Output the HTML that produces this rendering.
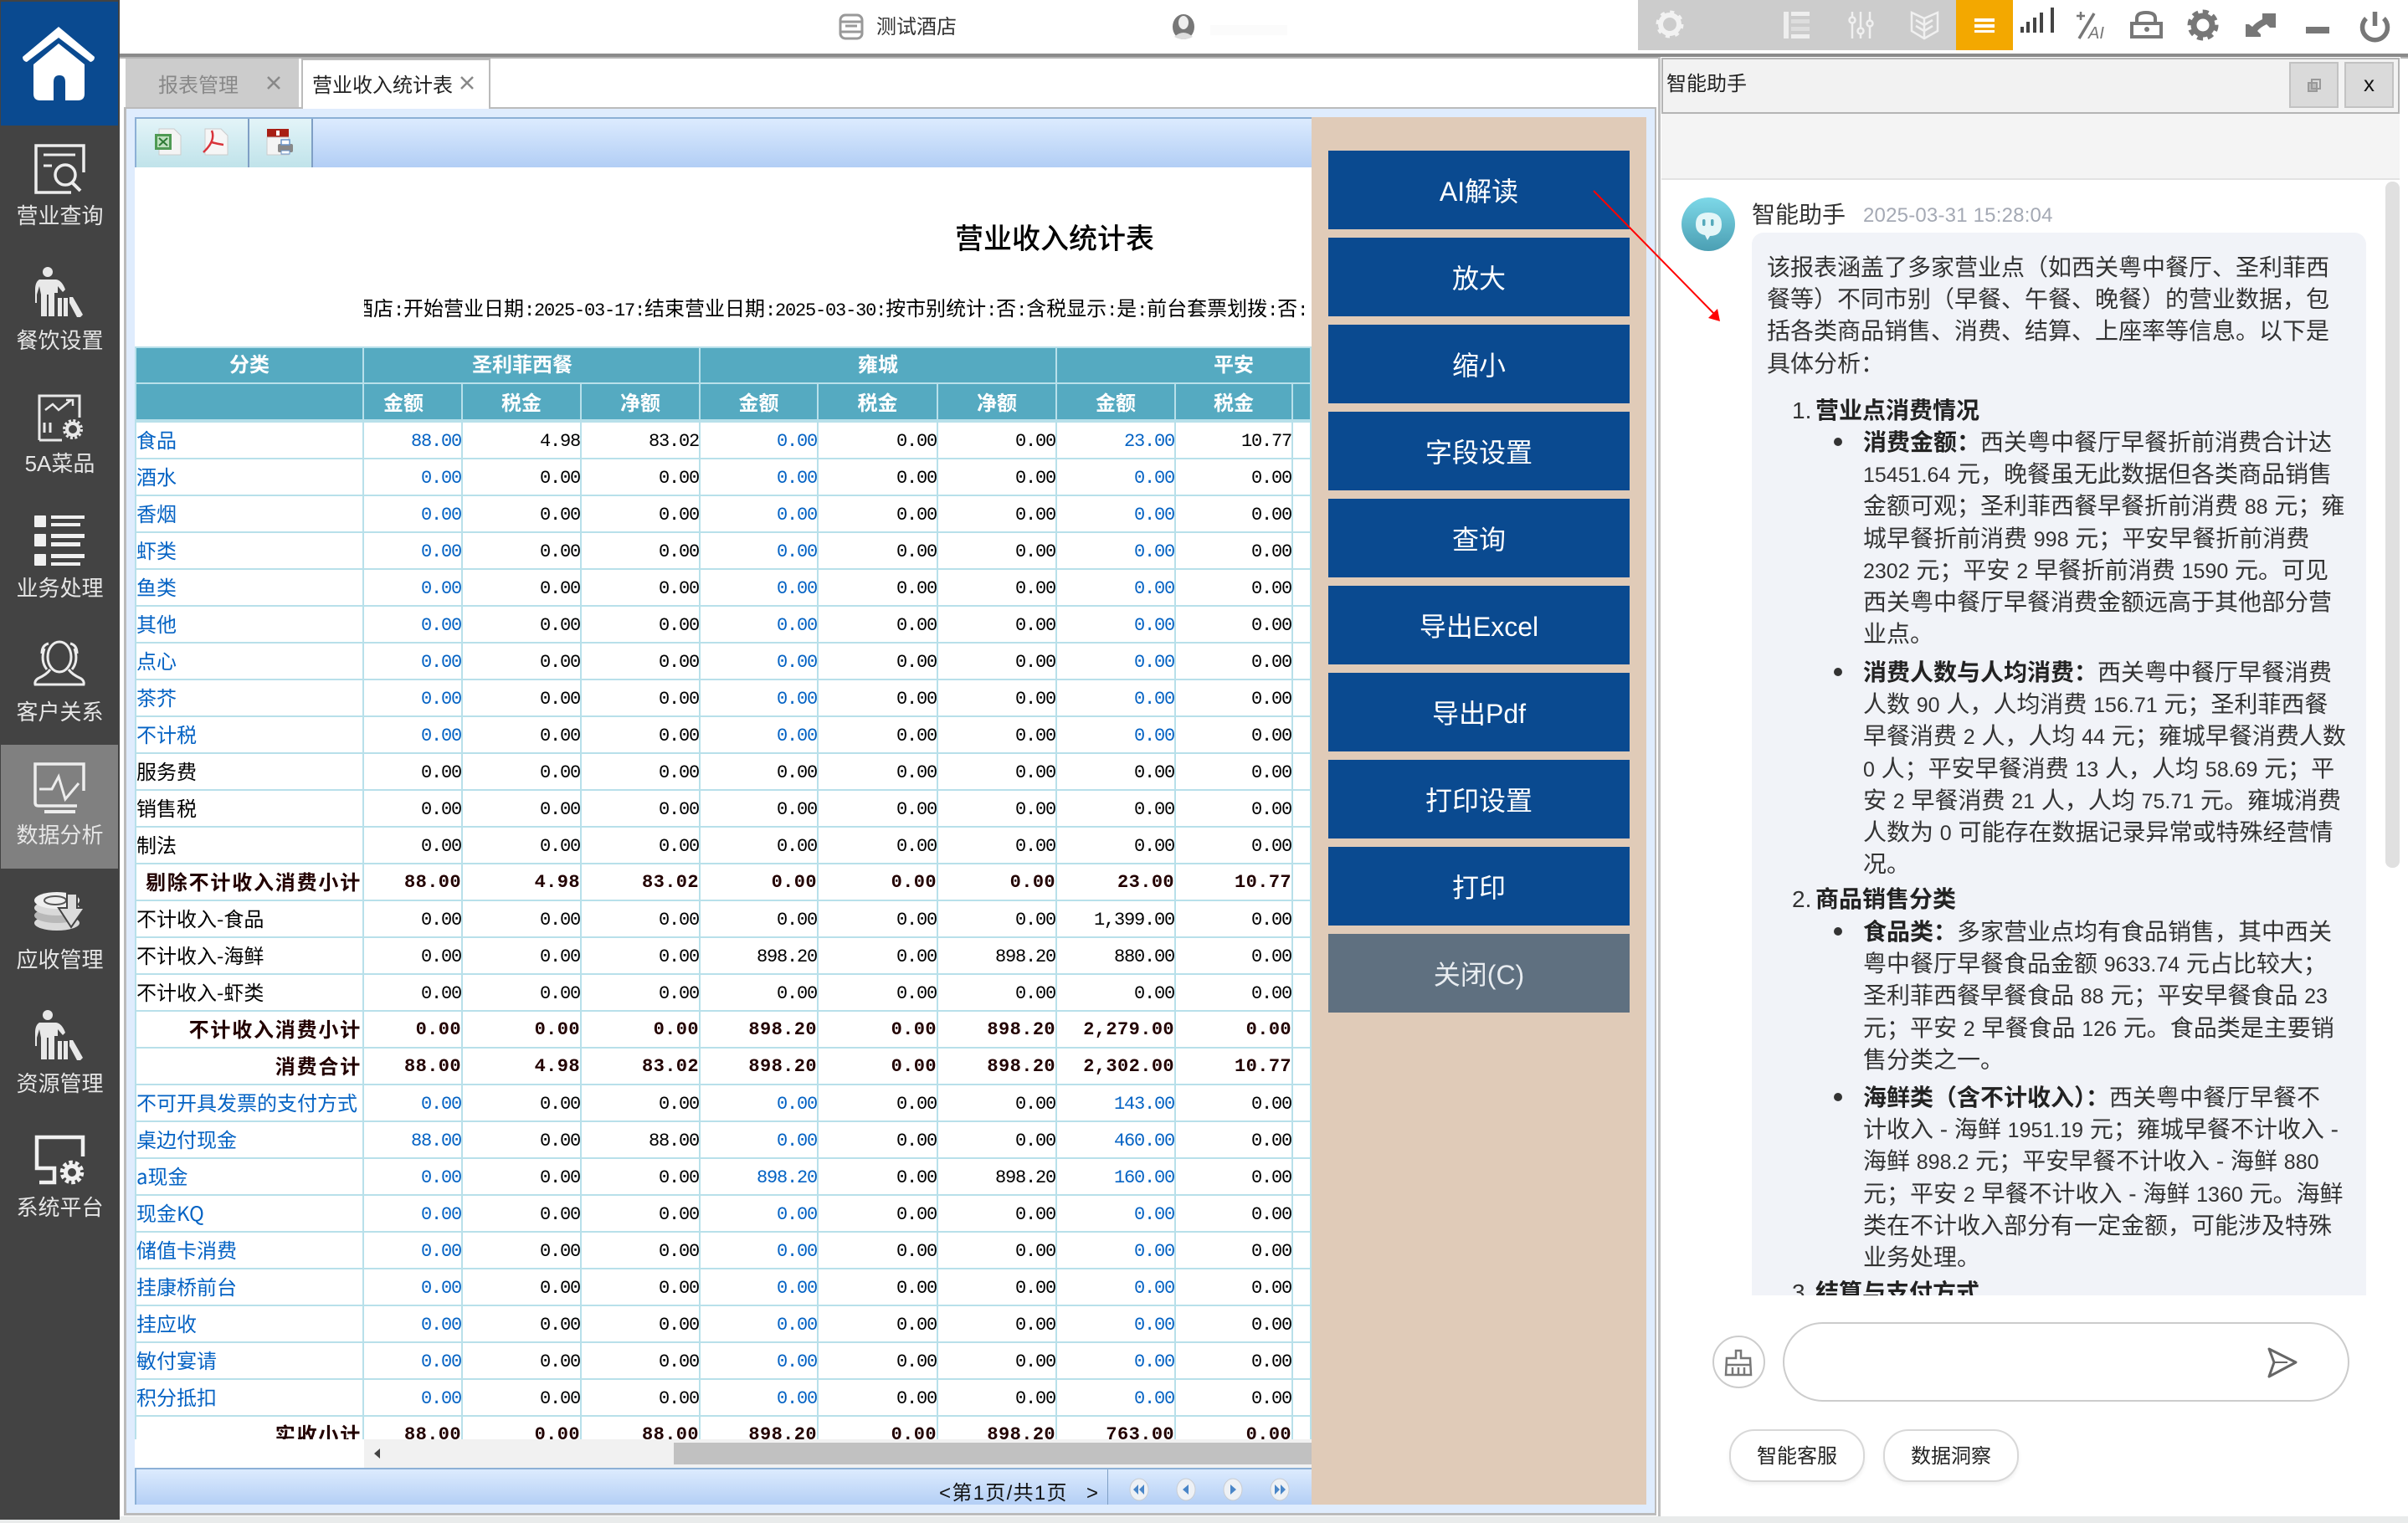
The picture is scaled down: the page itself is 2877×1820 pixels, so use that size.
<!DOCTYPE html>
<html lang="zh"><head><meta charset="utf-8"><title>营业收入统计表</title>
<style>
html,body{margin:0;padding:0;width:2877px;height:1820px;overflow:hidden;background:#fff}
body{position:relative;font-family:"Liberation Sans","Noto Sans CJK SC",sans-serif;color:#222}
div{position:absolute;box-sizing:border-box}
.side{left:0;top:0;width:143px;height:1816px;background:#434343}
.sl{left:0;width:143px;text-align:center;font-size:26px;line-height:30px;color:#e6e6e6;white-space:nowrap}
.t{white-space:nowrap;line-height:1}
.btn{left:1587px;width:360px;height:94px;background:#0a4a90;color:#fff;font-size:32px;line-height:98px;text-align:center}
#tw{left:161px;top:414px;width:1406px;height:1306px;overflow:hidden;background:#fff}
table{border-collapse:separate;border-spacing:0;table-layout:fixed;width:1406px;font-family:"Liberation Mono","Noto Sans CJK SC",monospace;font-size:22px;letter-spacing:-1.2px;color:#000;position:absolute;left:0;top:0}
td{height:44px;box-sizing:border-box;border-right:2px solid #b8e0ea;border-bottom:2px solid #b8e0ea;text-align:right;padding:3px 0 0;white-space:nowrap;line-height:1;overflow:hidden}
td:first-child{text-align:left;font-family:"Noto Sans CJK SC",sans-serif;font-size:24px;letter-spacing:0;border-left:2px solid #b8e0ea;padding:0 0 3px}
tr.h td{background:#55aac1;color:#fff;font-family:"Noto Sans CJK SC",sans-serif;font-weight:bold;font-size:24px;letter-spacing:0;text-align:center;border-color:#b8e0ea;padding:0}
tr.h0 td{border-top:2px solid #b8e0ea;height:45px;padding-bottom:5px}
tr.h1 td{border-bottom:4px solid #b8e0ea;height:46px}
tr.l td:nth-child(1),tr.l td:nth-child(2),tr.l td:nth-child(5),tr.l td:nth-child(8){color:#0563c4}
tr.s td{font-weight:bold;letter-spacing:.4px;color:#200;padding-top:1px}
tr.s td:first-child{text-align:right;padding:0 1px 3px 0;font-size:24px;letter-spacing:1.8px}
#bub{left:2093px;top:278px;width:734px;height:1270px;background:#f1f3f8;border-radius:14px 14px 0 0;overflow:hidden;font-family:"Liberation Sans","Noto Sans CJK SC",sans-serif;font-size:28px;line-height:38.2px;color:#333}
#bub div{white-space:nowrap}
#bub i{font-style:normal;font-size:25px;line-height:0}
#bub b{color:#222}
.chip{top:1708px;width:162px;height:63px;border:2px solid #d8d8d8;border-radius:30px;background:#fff;text-align:center;font-size:24px;line-height:62px;color:#222;box-shadow:0 3px 5px rgba(0,0,0,.06)}
#sub i{font-style:normal;font-family:"Liberation Mono",monospace;font-size:22px;letter-spacing:-1.2px;line-height:0}
</style></head>
<body>
<div style="left:0;top:1812px;width:2877px;height:8px;background:#e9ebeb"></div>
<div style="left:143px;top:64px;width:2734px;height:4px;background:#8a8a8a"></div>
<div style="left:143px;top:68px;width:2734px;height:2px;background:#b4b4b4"></div>

<!-- sidebar -->
<div class="side"></div>
<div style="left:1px;top:2px;width:140px;height:148px;background:#0a4a90"></div>
<div style="left:1px;top:890px;width:140px;height:148px;background:#808080"></div>
<div class="sl" style="top:243px">营业查询</div>
<div class="sl" style="top:392px">餐饮设置</div>
<div class="sl" style="top:539px">5A菜品</div>
<div class="sl" style="top:688px">业务处理</div>
<div class="sl" style="top:836px">客户关系</div>
<div class="sl" style="top:983px">数据分析</div>
<div class="sl" style="top:1132px">应收管理</div>
<div class="sl" style="top:1280px">资源管理</div>
<div class="sl" style="top:1428px">系统平台</div>

<!-- tabs -->
<div style="left:148px;top:128px;width:1831px;height:2px;background:#bbb"></div>
<div style="left:150px;top:70px;width:207px;height:58px;background:#ccc"></div>
<div class="t" style="left:189px;top:91px;font-size:24px;color:#888">报表管理</div>
<div style="left:360px;top:70px;width:226px;height:60px;background:#fff;border:2px solid #bbb;border-bottom:none"></div>
<div class="t" style="left:373px;top:91px;font-size:24px;color:#222">营业收入统计表</div>

<!-- main panel -->
<div style="left:148px;top:130px;width:1831px;height:1681px;background:#dfecfd;border-left:3px solid #bbb;border-right:2px solid #bbb;border-bottom:3px solid #bbb"></div>
<div style="left:161px;top:140px;width:1406px;height:60px;background:linear-gradient(#dcebfe,#b2cef5);border-top:2px solid #8cb0d6"></div>
<div style="left:161px;top:142px;width:135px;height:58px;background:linear-gradient(#e3f4f8,#c0e3ea);border-left:2px solid #8cb0d6"></div>
<div style="left:296px;top:142px;width:78px;height:58px;background:linear-gradient(#e3f4f8,#c0e3ea);border-left:2px solid #7f9fc5;border-right:2px solid #7f9fc5"></div>
<div style="left:161px;top:200px;width:1406px;height:1554px;background:#fff"></div>
<div class="t" style="left:1141px;top:266px;font-size:34px;font-family:'Noto Sans CJK SC',sans-serif;font-weight:500;color:#000">营业收入统计表</div>
<div style="left:435px;top:352px;width:1132px;height:34px;overflow:hidden">
<div class="t" id="sub" style="left:-13px;top:3px;font-size:24px;color:#000;font-family:'Noto Sans CJK SC',sans-serif">酒店<i>:</i>开始营业日期<i>:2025-03-17:</i>结束营业日期<i>:2025-03-30:</i>按市别统计<i>:</i>否<i>:</i>含税显示<i>:</i>是<i>:</i>前台套票划拨<i>:</i>否<i>:</i></div></div>

<div id="tw"><table>
<colgroup><col style="width:274px"><col style="width:118px"><col style="width:142px"><col style="width:142px"><col style="width:141px"><col style="width:143px"><col style="width:142px"><col style="width:142px"><col style="width:140px"><col style="width:22px"></colgroup>
<tr class="h h0"><td>分类</td><td colspan="3" style="padding-right:22px">圣利菲西餐</td><td colspan="3">雍城</td><td colspan="3" style="padding-left:120px">平安</td></tr>
<tr class="h h1"><td></td><td style="padding-right:22px">金额</td><td>税金</td><td>净额</td><td>金额</td><td>税金</td><td>净额</td><td>金额</td><td>税金</td><td></td></tr>
<tr class="l"><td>食品</td><td>88.00</td><td>4.98</td><td>83.02</td><td>0.00</td><td>0.00</td><td>0.00</td><td>23.00</td><td>10.77</td><td></td></tr>
<tr class="l"><td>酒水</td><td>0.00</td><td>0.00</td><td>0.00</td><td>0.00</td><td>0.00</td><td>0.00</td><td>0.00</td><td>0.00</td><td></td></tr>
<tr class="l"><td>香烟</td><td>0.00</td><td>0.00</td><td>0.00</td><td>0.00</td><td>0.00</td><td>0.00</td><td>0.00</td><td>0.00</td><td></td></tr>
<tr class="l"><td>虾类</td><td>0.00</td><td>0.00</td><td>0.00</td><td>0.00</td><td>0.00</td><td>0.00</td><td>0.00</td><td>0.00</td><td></td></tr>
<tr class="l"><td>鱼类</td><td>0.00</td><td>0.00</td><td>0.00</td><td>0.00</td><td>0.00</td><td>0.00</td><td>0.00</td><td>0.00</td><td></td></tr>
<tr class="l"><td>其他</td><td>0.00</td><td>0.00</td><td>0.00</td><td>0.00</td><td>0.00</td><td>0.00</td><td>0.00</td><td>0.00</td><td></td></tr>
<tr class="l"><td>点心</td><td>0.00</td><td>0.00</td><td>0.00</td><td>0.00</td><td>0.00</td><td>0.00</td><td>0.00</td><td>0.00</td><td></td></tr>
<tr class="l"><td>茶芥</td><td>0.00</td><td>0.00</td><td>0.00</td><td>0.00</td><td>0.00</td><td>0.00</td><td>0.00</td><td>0.00</td><td></td></tr>
<tr class="l"><td>不计税</td><td>0.00</td><td>0.00</td><td>0.00</td><td>0.00</td><td>0.00</td><td>0.00</td><td>0.00</td><td>0.00</td><td></td></tr>
<tr><td>服务费</td><td>0.00</td><td>0.00</td><td>0.00</td><td>0.00</td><td>0.00</td><td>0.00</td><td>0.00</td><td>0.00</td><td></td></tr>
<tr><td>销售税</td><td>0.00</td><td>0.00</td><td>0.00</td><td>0.00</td><td>0.00</td><td>0.00</td><td>0.00</td><td>0.00</td><td></td></tr>
<tr><td>制法</td><td>0.00</td><td>0.00</td><td>0.00</td><td>0.00</td><td>0.00</td><td>0.00</td><td>0.00</td><td>0.00</td><td></td></tr>
<tr class="s"><td>剔除不计收入消费小计</td><td>88.00</td><td>4.98</td><td>83.02</td><td>0.00</td><td>0.00</td><td>0.00</td><td>23.00</td><td>10.77</td><td></td></tr>
<tr><td>不计收入-食品</td><td>0.00</td><td>0.00</td><td>0.00</td><td>0.00</td><td>0.00</td><td>0.00</td><td>1,399.00</td><td>0.00</td><td></td></tr>
<tr><td>不计收入-海鲜</td><td>0.00</td><td>0.00</td><td>0.00</td><td>898.20</td><td>0.00</td><td>898.20</td><td>880.00</td><td>0.00</td><td></td></tr>
<tr><td>不计收入-虾类</td><td>0.00</td><td>0.00</td><td>0.00</td><td>0.00</td><td>0.00</td><td>0.00</td><td>0.00</td><td>0.00</td><td></td></tr>
<tr class="s"><td>不计收入消费小计</td><td>0.00</td><td>0.00</td><td>0.00</td><td>898.20</td><td>0.00</td><td>898.20</td><td>2,279.00</td><td>0.00</td><td></td></tr>
<tr class="s"><td>消费合计</td><td>88.00</td><td>4.98</td><td>83.02</td><td>898.20</td><td>0.00</td><td>898.20</td><td>2,302.00</td><td>10.77</td><td></td></tr>
<tr class="l"><td>不可开具发票的支付方式</td><td>0.00</td><td>0.00</td><td>0.00</td><td>0.00</td><td>0.00</td><td>0.00</td><td>143.00</td><td>0.00</td><td></td></tr>
<tr class="l"><td>桌边付现金</td><td>88.00</td><td>0.00</td><td>88.00</td><td>0.00</td><td>0.00</td><td>0.00</td><td>460.00</td><td>0.00</td><td></td></tr>
<tr class="l"><td>a现金</td><td>0.00</td><td>0.00</td><td>0.00</td><td>898.20</td><td>0.00</td><td>898.20</td><td>160.00</td><td>0.00</td><td></td></tr>
<tr class="l"><td>现金KQ</td><td>0.00</td><td>0.00</td><td>0.00</td><td>0.00</td><td>0.00</td><td>0.00</td><td>0.00</td><td>0.00</td><td></td></tr>
<tr class="l"><td>储值卡消费</td><td>0.00</td><td>0.00</td><td>0.00</td><td>0.00</td><td>0.00</td><td>0.00</td><td>0.00</td><td>0.00</td><td></td></tr>
<tr class="l"><td>挂康桥前台</td><td>0.00</td><td>0.00</td><td>0.00</td><td>0.00</td><td>0.00</td><td>0.00</td><td>0.00</td><td>0.00</td><td></td></tr>
<tr class="l"><td>挂应收</td><td>0.00</td><td>0.00</td><td>0.00</td><td>0.00</td><td>0.00</td><td>0.00</td><td>0.00</td><td>0.00</td><td></td></tr>
<tr class="l"><td>敏付宴请</td><td>0.00</td><td>0.00</td><td>0.00</td><td>0.00</td><td>0.00</td><td>0.00</td><td>0.00</td><td>0.00</td><td></td></tr>
<tr class="l"><td>积分抵扣</td><td>0.00</td><td>0.00</td><td>0.00</td><td>0.00</td><td>0.00</td><td>0.00</td><td>0.00</td><td>0.00</td><td></td></tr>
<tr class="s"><td>实收小计</td><td>88.00</td><td>0.00</td><td>88.00</td><td>898.20</td><td>0.00</td><td>898.20</td><td>763.00</td><td>0.00</td><td></td></tr>
</table></div>

<!-- h scrollbar -->
<div style="left:435px;top:1720px;width:1132px;height:34px;background:#f1f1f1"></div>
<div style="left:805px;top:1724px;width:762px;height:26px;background:#c1c1c1"></div>

<!-- pager -->
<div style="left:161px;top:1754px;width:1406px;height:44px;background:linear-gradient(#dcebfe,#b4cff5);border-top:2px solid #8cb0d6;border-left:2px solid #8cb0d6"></div>
<div style="left:1323px;top:1756px;width:1px;height:42px;background:#7f9fc5"></div>
<div class="t" style="left:1122px;top:1773px;font-size:24px;letter-spacing:1.3px;color:#111">&lt;第1页/共1页</div>
<div class="t" style="left:1298px;top:1773px;font-size:24px;color:#111">&gt;</div>

<!-- right action panel -->
<div style="left:1567px;top:140px;width:400px;height:1658px;background:#e0cbb8"></div>
<div class="btn" style="top:180px">AI解读</div>
<div class="btn" style="top:284px">放大</div>
<div class="btn" style="top:388px">缩小</div>
<div class="btn" style="top:492px">字段设置</div>
<div class="btn" style="top:596px">查询</div>
<div class="btn" style="top:700px">导出Excel</div>
<div class="btn" style="top:804px">导出Pdf</div>
<div class="btn" style="top:908px">打印设置</div>
<div class="btn" style="top:1012px">打印</div>
<div class="btn" style="top:1116px;background:#5f7080;color:#e8ecf0">关闭(C)</div>

<!-- top bar -->
<div class="t" style="left:1047px;top:21px;font-size:24px;color:#333">测试酒店</div>
<div style="left:1446px;top:30px;width:92px;height:12px;background:#fbfbfb"></div>
<div style="left:1957px;top:0;width:380px;height:60px;background:#ccc"></div>
<div style="left:2337px;top:0;width:68px;height:60px;background:#f3a800"></div>

<!-- assistant -->
<div style="left:1981px;top:68px;width:887px;height:1744px;background:#fff;border-left:3px solid #c0c0c0"></div>
<div style="left:1985px;top:135px;width:882px;height:80px;background:#f4f4f4;border-bottom:2px solid #e2e2e2"></div>
<div style="left:1985px;top:69px;width:882px;height:67px;background:#f2f2f2;border:2px solid #b4b4b4;border-width:2px 2px 2px 2px"></div>
<div style="left:2735px;top:74px;width:59px;height:55px;background:#dadada;border:2px solid #c2c2c2"></div>
<div style="left:2801px;top:74px;width:59px;height:55px;background:#dadada;border:2px solid #c2c2c2;text-align:center;font-size:26px;line-height:48px;color:#111">x</div>
<div class="t" style="left:1991px;top:89px;font-size:24px;color:#222">智能助手</div>
<div style="left:2850px;top:217px;width:17px;height:820px;background:#e0e0e0;border-radius:8px"></div>
<div class="t" style="left:2093px;top:243px;font-size:28px;color:#333">智能助手</div>
<div class="t" style="left:2226px;top:246px;font-size:24px;letter-spacing:.2px;color:#a4a9b4">2025-03-31 15:28:04</div>

<div id="bub">
<div style="left:18px;top:23px">该报表涵盖了多家营业点（如西关粤中餐厅、圣利菲西<br>餐等）不同市别（早餐、午餐、晚餐）的营业数据，包<br>括各类商品销售、消费、结算、上座率等信息。以下是<br>具体分析：</div>
<div style="left:48px;top:194px">1.</div><div style="left:76px;top:194px"><b>营业点消费情况</b></div>
<div style="left:133px;top:232px"><b>消费金额：</b>西关粤中餐厅早餐折前消费合计达<br><i>15451.64</i> 元，晚餐虽无此数据但各类商品销售<br>金额可观；圣利菲西餐早餐折前消费 <i>88</i> 元；雍<br>城早餐折前消费 <i>998</i> 元；平安早餐折前消费<br><i>2302</i> 元；平安 <i>2</i> 早餐折前消费 <i>1590</i> 元。可见<br>西关粤中餐厅早餐消费金额远高于其他部分营<br>业点。</div>
<div style="left:133px;top:507px"><b>消费人数与人均消费：</b>西关粤中餐厅早餐消费<br>人数 <i>90</i> 人，人均消费 <i>156.71</i> 元；圣利菲西餐<br>早餐消费 <i>2</i> 人，人均 <i>44</i> 元；雍城早餐消费人数<br><i>0</i> 人；平安早餐消费 <i>13</i> 人，人均 <i>58.69</i> 元；平<br>安 <i>2</i> 早餐消费 <i>21</i> 人，人均 <i>75.71</i> 元。雍城消费<br>人数为 <i>0</i> 可能存在数据记录异常或特殊经营情<br>况。</div>
<div style="left:48px;top:778px">2.</div><div style="left:76px;top:778px"><b>商品销售分类</b></div>
<div style="left:133px;top:817px"><b>食品类：</b>多家营业点均有食品销售，其中西关<br>粤中餐厅早餐食品金额 <i>9633.74</i> 元占比较大；<br>圣利菲西餐早餐食品 <i>88</i> 元；平安早餐食品 <i>23</i><br>元；平安 <i>2</i> 早餐食品 <i>126</i> 元。食品类是主要销<br>售分类之一。</div>
<div style="left:133px;top:1015px"><b>海鲜类（含不计收入）：</b>西关粤中餐厅早餐不<br>计收入 - 海鲜 <i>1951.19</i> 元；雍城早餐不计收入 -<br>海鲜 <i>898.2</i> 元；平安早餐不计收入 - 海鲜 <i>880</i><br>元；平安 <i>2</i> 早餐不计收入 - 海鲜 <i>1360</i> 元。海鲜<br>类在不计收入部分有一定金额，可能涉及特殊<br>业务处理。</div>
<div style="left:48px;top:1248px">3.</div><div style="left:76px;top:1248px"><b>结算与支付方式</b></div>
<div style="left:98px;top:245px;width:10px;height:10px;border-radius:50%;background:#333"></div>
<div style="left:98px;top:520px;width:10px;height:10px;border-radius:50%;background:#333"></div>
<div style="left:98px;top:830px;width:10px;height:10px;border-radius:50%;background:#333"></div>
<div style="left:98px;top:1028px;width:10px;height:10px;border-radius:50%;background:#333"></div>
</div>

<div style="left:2130px;top:1580px;width:677px;height:95px;border:2px solid #ccc;border-radius:48px;background:#fff"></div>
<div style="left:2046px;top:1596px;width:63px;height:63px;border:2px solid #ccc;border-radius:50%;background:#fff"></div>
<div class="chip" style="left:2066px">智能客服</div>
<div class="chip" style="left:2250px">数据洞察</div>

<!-- icon layer -->
<svg width="2877" height="1820" viewBox="0 0 2877 1820" style="position:absolute;left:0;top:0;pointer-events:none">
<defs>
<linearGradient id="av" x1="0" y1="0" x2="0" y2="1"><stop offset="0" stop-color="#7dd8e8"/><stop offset="1" stop-color="#4b9fb3"/></linearGradient>
<g id="man" fill="#e8e8e8"><circle cx="57" cy="325" r="6"/><path d="M47 334H67Q74 335 78 346L75 349L69 342V350H65V378H58V352H56V378H49V352L47 342L44 352V362H42V346Q42 337 47 334Z"/><path d="M69 356H74V378H69ZM76 356H81V378H76ZM83 355L87 355L99 376L96 379H92L83 362Z"/></g>
</defs>
<!-- home -->
<path fill="#fff" d="M70 32 113 68Q113 73 108 74L70 45 32 74Q27 73 27 68Z"/>
<path fill="#fff" d="M40 77 70 52 101 77V112Q101 120 93 120H78V98Q78 90 71 90 64 90 64 98V120H48Q40 120 40 112Z"/>
<!-- 营业查询 -->
<g fill="none" stroke="#ececec" stroke-width="3.5">
<path d="M100 206V174H43V230H85"/><path d="M52 185H90M52 198H62" stroke-width="3"/><circle cx="78" cy="209" r="12"/><path d="M86 218 96 228" stroke-width="4"/>
</g>
<use href="#man"/>
<!-- 5A菜品 -->
<g fill="none" stroke="#e8e8e8" stroke-width="3">
<path d="M47 526V473H95V499M47 526H74"/><path d="M54 490 63 483 70 490 85 478M79 478H87V485" stroke-width="2.5"/>
<path d="M53 505V517M60 505V517" stroke-width="3"/>
<circle cx="87" cy="513" r="7" stroke-width="4"/><circle cx="87" cy="513" r="10.5" stroke-width="3" stroke-dasharray="3 2.5"/>
</g>
<!-- 业务处理 -->
<g fill="#f0f0f0"><rect x="41" y="616" width="14" height="14" rx="1"/><rect x="41" y="638" width="14" height="15" rx="1"/><rect x="41" y="662" width="14" height="14" rx="1"/>
<rect x="61" y="616" width="40" height="4"/><rect x="61" y="625" width="35" height="4"/><rect x="61" y="638" width="40" height="5"/><rect x="61" y="648" width="35" height="5"/><rect x="61" y="662" width="40" height="5"/><rect x="61" y="672" width="35" height="4"/></g>
<!-- 客户关系 -->
<g fill="none" stroke="#ececec" stroke-width="3">
<ellipse cx="71" cy="785" rx="14" ry="18"/>
<path d="M53 775Q48 790 56 800M89 775Q94 790 86 800"/>
<path d="M60 800Q56 806 45 811 41 814 42 818H100Q101 814 97 811 86 806 82 800"/>
<path d="M58 769Q50 771 50 781M84 769Q92 771 92 781"/>
</g>
<!-- 数据分析 -->
<g fill="none" stroke="#ededed" stroke-width="3.5">
<path d="M100 945V913H42V959Q42 963 46 963H92"/><path d="M53 970H90" stroke-width="4"/><path d="M47 943H62L70 928 78 955 94 936" stroke-width="3"/>
</g>
<!-- 应收管理 -->
<g fill="#d9d9d9"><ellipse cx="68" cy="1103" rx="27" ry="9" /><ellipse cx="68" cy="1094" rx="27" ry="9" fill="#b8b8b8"/><ellipse cx="68" cy="1085" rx="27" ry="9"/><ellipse cx="68" cy="1076" rx="27" ry="10" fill="#efefef"/><ellipse cx="66" cy="1076" rx="13" ry="5" fill="none" stroke="#555" stroke-width="2"/><path d="M80 1068H92V1085H101L85 1108 70 1085H80Z" fill="#dcdcdc" stroke="#434343" stroke-width="2"/></g>
<use href="#man" y="888"/>
<!-- 系统平台 -->
<g fill="none" stroke="#f0f0f0" stroke-width="4.5">
<path d="M99 1382V1359H44V1396H65V1413H47"/><circle cx="86" cy="1401" r="7.5" stroke-width="5"/><circle cx="86" cy="1401" r="12" stroke-width="4.5" stroke-dasharray="4.5 3"/>
</g>

<!-- tab close -->
<g fill="none" stroke="#888" stroke-width="2.5"><path d="M320 92 334 106M334 92 320 106"/><path d="M551 92 565 106M565 92 551 106"/></g>

<!-- toolbar icons -->
<path d="M190 154H208L216 162V185H190Z" fill="#f4f4f4" stroke="#ccc"/><rect x="185" y="160" width="20" height="19" fill="#4f9a54"/><rect x="188" y="163" width="14" height="13" fill="#bfe0c0"/><path d="M190 165 200 174M200 165 190 174" stroke="#2e7a35" stroke-width="2"/>
<path d="M245 154H264L272 162V185H245Z" fill="#f6f6f6" stroke="#ccc"/><path d="M253 156Q258 168 243 182M253 170Q260 172 267 173" fill="none" stroke="#d8333a" stroke-width="2.5"/>
<rect x="319" y="154" width="26" height="10" fill="#a81e14"/><rect x="330" y="156" width="4" height="6" fill="#fff"/><path d="M319 164H345V185H319Z" fill="#f4f4f4" stroke="#ccc"/><rect x="332" y="172" width="18" height="10" fill="#888" rx="2"/><rect x="336" y="167" width="10" height="6" fill="#fff" stroke="#6a94c8" stroke-width="1.5"/><rect x="336" y="180" width="10" height="4" fill="#fff" stroke="#6a94c8"/>

<!-- scrollbar arrow, pager nav -->
<path d="M454 1731V1743L447 1737Z" fill="#444"/>
<g fill="#eef1f5" stroke="#c8ccd2"><ellipse cx="1361" cy="1780" rx="11" ry="13"/><ellipse cx="1417" cy="1780" rx="11" ry="13"/><ellipse cx="1473" cy="1780" rx="11" ry="13"/><ellipse cx="1529" cy="1780" rx="11" ry="13"/></g>
<g fill="#4a86c8"><path d="M1360 1774V1786L1354 1780ZM1367 1774V1786L1361 1780Z"/><path d="M1420 1774V1786L1413 1780Z"/><path d="M1470 1774V1786L1477 1780Z"/><path d="M1523 1774V1786L1529 1780ZM1530 1774V1786L1536 1780Z"/></g>

<!-- red arrow -->
<path d="M1904 228 2049 376" stroke="#f00" stroke-width="2" fill="none"/>
<path d="M2055 384 2041 380 2052 369Z" fill="#f00"/>

<!-- top center icons -->
<g fill="none" stroke="#999" stroke-width="3"><rect x="1004" y="18" width="26" height="28" rx="6"/><path d="M1004 26H1030M1004 38H1030M1010 31H1024"/></g>
<ellipse cx="1414" cy="32" rx="13" ry="15" fill="#777"/><ellipse cx="1414" cy="27" rx="6" ry="8" fill="#eee"/><path d="M1403 44Q1414 34 1425 44Q1414 50 1403 44Z" fill="#ddd"/>

<!-- gray zone icons -->
<g fill="none" stroke="#f2f2f2"><circle cx="1995" cy="29" r="11" stroke-width="6"/><circle cx="1995" cy="29" r="14.5" stroke-width="4" stroke-dasharray="5 6.4"/></g>
<g fill="#eee"><rect x="2131" y="14" width="6" height="32"/><rect x="2140" y="14" width="22" height="5"/><rect x="2140" y="23" width="22" height="5" fill="#ddd"/><rect x="2140" y="32" width="22" height="5" fill="#ddd"/><rect x="2140" y="41" width="22" height="5"/></g>
<g fill="none" stroke="#f0f0f0" stroke-width="2.5"><path d="M2213 14V46M2223 14V46M2234 14V46"/><circle cx="2213" cy="24" r="3.5" fill="#ccc"/><circle cx="2223" cy="37" r="3.5" fill="#ccc"/><circle cx="2234" cy="28" r="3.5" fill="#ccc"/></g>
<g fill="none" stroke="#f0f0f0" stroke-width="2.5"><path d="M2284 15 2299 22 2315 15V37L2299 46 2284 37ZM2299 22V46M2289 24 2299 30 2309 24M2289 31 2299 37 2309 31"/></g>
<g fill="#fff"><rect x="2359" y="22" width="24" height="4"/><rect x="2359" y="29" width="24" height="4"/><rect x="2359" y="36" width="24" height="3"/></g>

<!-- signal -->
<g fill="#444"><rect x="2414" y="32" width="4" height="7"/><rect x="2421" y="26" width="4" height="13"/><rect x="2429" y="21" width="4" height="18"/><rect x="2437" y="15" width="4" height="24"/><rect x="2450" y="9" width="4" height="30"/></g>
<!-- %AI -->
<path d="M2502 16 2484 46" stroke="#777" stroke-width="3.5"/><path d="M2481 19H2491M2486 14V24" stroke="#777" stroke-width="2.5"/>
<text x="2495" y="46" font-size="20" font-family="Liberation Sans,sans-serif" font-style="italic" fill="#777">AI</text>
<!-- lock -->
<g fill="none" stroke="#777" stroke-width="4"><path d="M2553 27V22Q2553 15 2564 15 2575 15 2575 22V27"/><rect x="2547" y="28" width="35" height="16"/></g><circle cx="2565" cy="35" r="3" fill="#777"/>
<!-- gear -->
<g fill="none" stroke="#777"><circle cx="2632" cy="30" r="11" stroke-width="7"/><circle cx="2632" cy="30" r="16" stroke-width="5" stroke-dasharray="7 5.5"/></g>
<!-- expand -->
<path fill="#777" d="M2703 16H2719V33H2712L2708 29Q2700 33 2697 37L2701 41V44H2683V29H2687L2691 32Q2695 27 2703 23Z"/>
<!-- minimize -->
<rect x="2755" y="32" width="28" height="8" fill="#777"/>
<!-- power -->
<g fill="none" stroke="#777" stroke-width="5.5"><path d="M2827 22A15 15 0 1 0 2848 22"/><path d="M2837.5 14V31"/></g>

<!-- restore -->
<g fill="none" stroke="#999" stroke-width="2"><rect x="2758" y="99" width="10" height="10" fill="#bbb"/><rect x="2762" y="95" width="10" height="11"/></g>

<!-- avatar -->
<circle cx="2041" cy="268" r="32" fill="url(#av)"/>
<path d="M2026 268Q2026 254 2041 254 2057 254 2057 268 2057 282 2043 282L2040 287 2037 281Q2026 279 2026 268Z" fill="#e4f6f8"/>
<rect x="2034" y="262" width="3.5" height="8" rx="1.7" fill="#55a9bb"/><rect x="2044" y="262" width="3.5" height="8" rx="1.7" fill="#55a9bb"/>

<!-- broom -->
<g fill="none" stroke="#777" stroke-width="2.5"><path d="M2074 1614H2080V1623H2091L2092 1643H2062L2063 1623H2074Z"/><path d="M2063 1631H2091M2070 1634V1643M2077 1634V1643M2084 1634V1643"/></g>
<!-- send -->
<path d="M2711 1612 2743 1628 2711 1645 2717 1628Z" fill="none" stroke="#666" stroke-width="3" stroke-linejoin="round"/><path d="M2717 1628H2733" stroke="#666" stroke-width="2"/>
</svg>
</body></html>
